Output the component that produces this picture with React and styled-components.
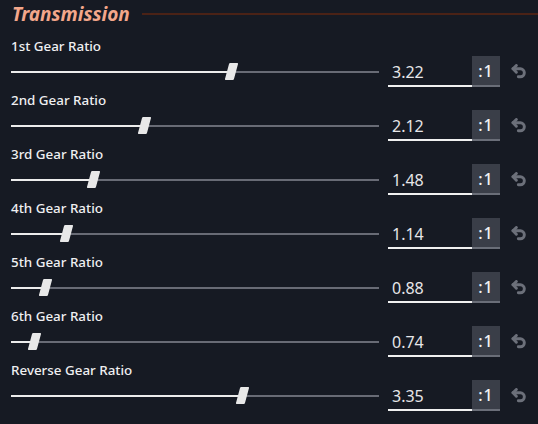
import React from "react";
import styled, { createGlobalStyle } from "styled-components";

const Global = createGlobalStyle`
  html, body { margin: 0; padding: 0; background: #161a23; }
  body { font-family: "Noto Sans", "Open Sans", sans-serif; color: #e9e9ec; }
  * { box-sizing: border-box; }
`;

const Panel = styled.div`
  width: 538px;
  height: 424px;
  overflow: hidden;
  padding: 0 0 0 11px;
  background: #161a23;
`;

const Header = styled.div`
  display: flex;
  align-items: center;
  height: 28px;
  gap: 12px;
  margin-bottom: 6px;
`;

const Title = styled.h2`
  margin: 0;
  padding-left: 1px;
  font-size: 19px;
  font-weight: 700;
  font-style: italic;
  color: #f3a78b;
  line-height: 24px;
`;

const Rule = styled.div`
  flex: 1;
  height: 2px;
  background: #4a2216;
`;

const Row = styled.div`
  display: flex;
  flex-direction: column;
  height: 54px;
`;

const Label = styled.div`
  font-size: 13.4px;
  font-weight: 500;
  line-height: 20px;
  height: 22px;
  color: #efeff1;
  padding-top: 2px;
`;

const Controls = styled.div`
  display: flex;
  align-items: center;
  height: 31px;
`;

const Slider = styled.div`
  position: relative;
  width: 368px;
  height: 31px;
  margin-right: 9px;
  display: flex;
  align-items: center;
`;

const Track = styled.div`
  width: 100%;
  height: 2px;
  background: #686b75;
`;

const Fill = styled.div`
  height: 100%;
  background: #ececec;
`;

const Thumb = styled.div`
  position: absolute;
  top: 7px;
  width: 9px;
  height: 17px;
  margin-left: -4px;
  background: #e8e8e8;
  transform: skewX(-15deg);
  border-radius: 1px;
`;

const Input = styled.div`
  width: 84px;
  height: 31px;
  border-bottom: 2px solid #f0f0f0;
  padding: 3px 0 0 4px;
  font-size: 16px;
  line-height: 26px;
  color: #e6e6e8;
`;

const Suffix = styled.div`
  width: 28px;
  height: 31px;
  background: #3a3e48;
  border-bottom: 2px solid #6a6e78;
  display: flex;
  align-items: center;
  justify-content: center;
  font-size: 16px;
  font-weight: 500;
  letter-spacing: 1px;
  color: #f2f2f4;
  padding-top: 1px;
`;

const Reset = styled.button`
  width: 38px;
  height: 31px;
  border: none;
  background: transparent;
  padding: 0;
  display: flex;
  align-items: center;
  justify-content: center;
  color: #6c707a;
`;

const UndoIcon = () => (
  <svg width="16" height="15" viewBox="0 0 24 22" fill="none" stroke="currentColor" strokeWidth="4.4" strokeLinecap="round" strokeLinejoin="round">
    <path d="M8 12 3 7l5-5" />
    <path d="M3 7h11a6 6 0 0 1 0 12h-3" />
  </svg>
);

const gears = [
  ["1st Gear Ratio", 3.22],
  ["2nd Gear Ratio", 2.12],
  ["3rd Gear Ratio", 1.48],
  ["4th Gear Ratio", 1.14],
  ["5th Gear Ratio", 0.88],
  ["6th Gear Ratio", 0.74],
  ["Reverse Gear Ratio", 3.35],
];

const MIN = 0.5;
const MAX = 5;

export default function App() {
  return (
    <>
      <Global />
      <Panel>
        <Header>
          <Title>Transmission</Title>
          <Rule />
        </Header>
        {gears.map(([label, v]) => {
          const pos = 4 + ((v - MIN) / (MAX - MIN)) * 358;
          return (
            <Row key={label}>
              <Label>{label}</Label>
              <Controls>
                <Slider>
                  <Track>
                    <Fill style={{ width: `${pos}px` }} />
                  </Track>
                  <Thumb style={{ left: `${pos}px` }} />
                </Slider>
                <Input>{v.toFixed(2)}</Input>
                <Suffix>:1</Suffix>
                <Reset>
                  <UndoIcon />
                </Reset>
              </Controls>
            </Row>
          );
        })}
      </Panel>
    </>
  );
}
